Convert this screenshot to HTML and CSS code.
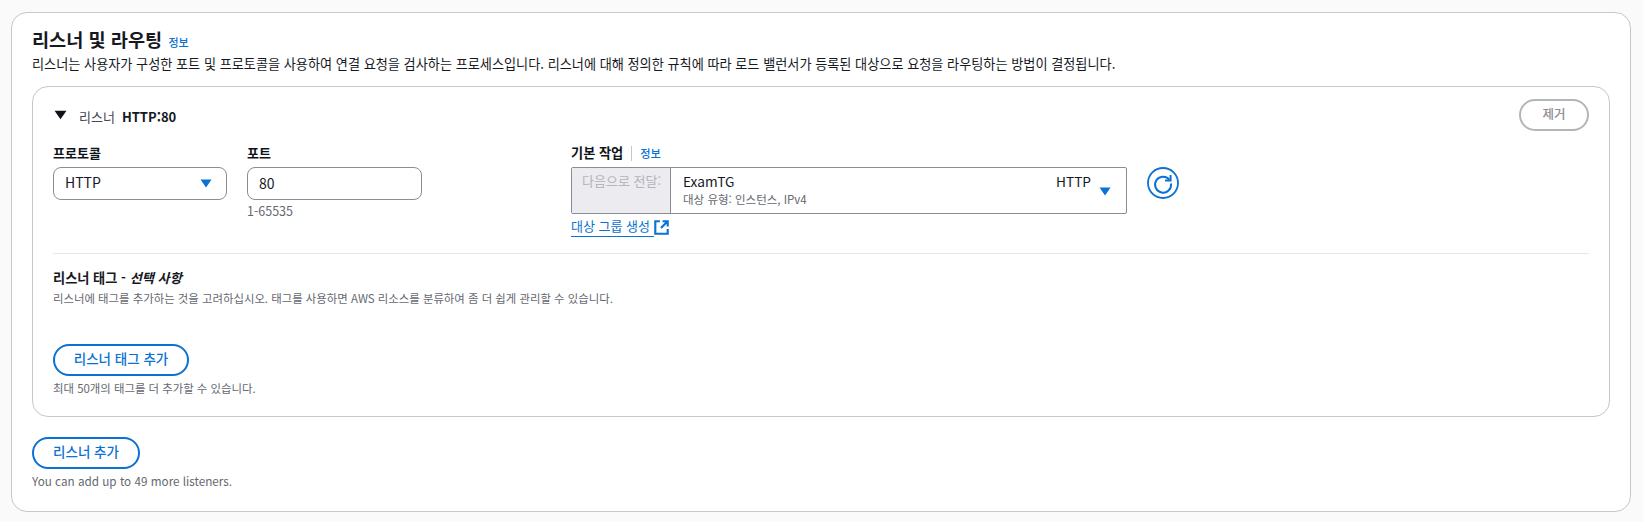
FILE: index.html
```html
<!DOCTYPE html>
<html lang="ko">
<head>
<meta charset="utf-8">
<title>리스너 및 라우팅</title>
<link rel="stylesheet" href="styles.css">
</head>
<body>
<section class="card">
  <header class="head">
    <h2 class="title">리스너 및 라우팅 <a class="info info-title">정보</a></h2>
    <p class="desc">리스너는 사용자가 구성한 포트 및 프로토콜을 사용하여 연결 요청을 검사하는 프로세스입니다. 리스너에 대해 정의한 규칙에 따라 로드 밸런서가 등록된 대상으로 요청을 라우팅하는 방법이 결정됩니다.</p>
  </header>
  <div class="listener">
    <div class="listener-head">
      <div class="listener-name">
        <svg class="caret-black" viewBox="0 0 12 9"><path d="M0.5 0.5h11L6 8.5z"/></svg>
        <span class="ln-label">리스너</span>
        <strong class="ln-value">HTTP:80</strong>
      </div>
      <button class="btn btn-disabled">제거</button>
    </div>
    <div class="fields">
      <div class="field f-protocol">
        <label class="label">프로토콜</label>
        <div class="select"><span class="val">HTTP</span><svg class="caret-blue" viewBox="0 0 12 9"><path d="M0.5 0.5h11L6 8.5z"/></svg></div>
      </div>
      <div class="field f-port">
        <label class="label">포트</label>
        <div class="input"><span class="val val-port">80</span></div>
        <div class="help">1-65535</div>
      </div>
      <div class="field f-action">
        <div class="label-row"><label class="label">기본 작업</label><span class="sep"></span><a class="info">정보</a></div>
        <div class="action-row">
          <div class="action">
            <div class="action-prefix">다음으로 전달:</div>
            <div class="action-main">
              <div class="action-text">
                <div class="action-line"><span>ExamTG</span><span>HTTP</span></div>
                <div class="action-sub">대상 유형: 인스턴스, IPv4</div>
              </div>
              <svg class="caret-blue caret-low" viewBox="0 0 12 9"><path d="M0.5 0.5h11L6 8.5z"/></svg>
            </div>
          </div>
          <svg class="refresh" viewBox="0 0 32 32" fill="none"><circle cx="16" cy="16" r="15" stroke="#0972d3" stroke-width="1.8"/><path d="M22.2 12.5A8 8 0 1 0 24 16.5" stroke="#0972d3" stroke-width="2"/><path d="M23.6 8v5.6H18" stroke="#0972d3" stroke-width="2"/></svg>
        </div>
        <a class="link"><span class="link-text">대상 그룹 생성</span><svg class="ext" viewBox="0 0 14 14" fill="none"><path d="M5.5 1.2H1.2v11.6h11.6V8.5M8 1.2h4.8V6M12.5 1.5L6.5 7.5" stroke="#0972d3" stroke-width="2"/></svg></a>
      </div>
    </div>
    <div class="tags">
      <h3 class="tags-title">리스너 태그 - <em>선택 사항</em></h3>
      <p class="small tags-desc">리스너에 태그를 추가하는 것을 고려하십시오. 태그를 사용하면 AWS 리소스를 분류하여 좀 더 쉽게 관리할 수 있습니다.</p>
      <button class="btn btn-tag">리스너 태그 추가</button>
      <p class="small limit">최대 50개의 태그를 더 추가할 수 있습니다.</p>
    </div>
  </div>
  <button class="btn btn-add">리스너 추가</button>
  <p class="small limit limit-en">You can add up to 49 more listeners.</p>
</section>
</body>
</html>
```
FILE: styles.css
```css
* { box-sizing: border-box; }
html, body { margin: 0; height: 100%; }
body {
  background: #fafafa;
  color: #16191f;
  font-family: "Noto Sans CJK KR", "Open Sans", sans-serif;
  font-size: 14px;
  padding: 12px 12px 10px 11px;
  overflow: hidden;
}
.card {
  height: 500px;
  background: #fff;
  border: 1px solid #c6c6cd;
  border-radius: 16px;
  padding: 16px 20px 0;
}
.head { height: 57px; }
.title { margin: 0; font-size: 18.6px; line-height: 20px; font-weight: 700; }
.info { color: #0972d3; font-size: 11.2px; font-weight: 500; }
.info-title { margin-left: 1px; font-size: 11px; }
.desc { margin: 2px 0 0; font-size: 13.15px; line-height: 20px; color: #16191f; white-space: nowrap; }
.listener {
  height: 331px;
  border: 1px solid #c6c6cd;
  border-radius: 16px;
  padding: 12px 20px 0;
}
.listener-head { display: flex; justify-content: space-between; align-items: flex-start; height: 46px; }
.listener-name { display: flex; align-items: center; height: 32px; padding-top: 2px; }
.caret-black { width: 13px; height: 10px; fill: #0f141a; margin: -2px 12px 0 1px; }
.ln-label { color: #424650; font-size: 13px; }
.ln-value { margin-left: 7px; font-weight: 700; font-size: 13px; }
.btn {
  display: block;
  height: 32px;
  border-radius: 16px;
  border: 2px solid #0972d3;
  background: #fff;
  color: #0972d3;
  padding: 0 0 2px;
  font: 500 13.5px/1 "Noto Sans CJK KR", sans-serif;
}
.btn-disabled { width: 70px; border-color: #b4b4bb; color: #8c8c94; font-size: 12.5px; }
.fields { display: flex; height: 109px; border-bottom: 1px solid #e8e8ec; }
.field { display: flex; flex-direction: column; }
.f-protocol { width: 174px; margin-right: 20px; }
.f-port { width: 175px; margin-right: 149px; }
.f-action { flex: 1; }
.label { font-size: 13px; font-weight: 700; line-height: 16px; height: 20px; margin-bottom: 2px; color: #0f141a; }
.label-row { display: flex; align-items: flex-start; height: 20px; margin-bottom: 2px; }
.label-row .label { margin: 0; font-size: 13.2px; }
.label-row .info { line-height: 16px; }
.sep { width: 1px; height: 15px; background: #c6c6cd; margin: 1px 8px 0; }
.select, .input {
  height: 33px;
  border: 1px solid #8c8c94;
  border-radius: 8px;
  display: flex;
  align-items: center;
  padding: 0 11px;
  font-size: 14px;
  background: #fff;
}
.val { margin-top: -4px; }
.val-port { margin-top: -2px; }
.select { justify-content: space-between; padding-right: 14px; }
.caret-blue { width: 12px; height: 9px; fill: #0972d3; }
.help { font-size: 12.5px; line-height: 16px; color: #656871; margin-top: 3px; }
.action-row { display: flex; align-items: flex-start; gap: 20px; }
.action {
  width: 556px;
  height: 47px;
  border: 1px solid #8c8c94;
  border-radius: 2px;
  display: flex;
}
.action-prefix {
  width: 99px;
  background: #ebebf0;
  border-right: 1px solid #8c8c94;
  color: #b4b4bb;
  font-size: 13px;
  line-height: 16px;
  padding: 5px 0 0 10px;
  white-space: nowrap;
}
.action-main { flex: 1; display: flex; padding: 3px 15px 0 12px; gap: 8px; }
.action-text { flex: 1; }
.action-line { display: flex; justify-content: space-between; font-size: 13.7px; line-height: 20px; }
.action-sub { font-size: 11.5px; line-height: 16px; color: #656871; }
.caret-low { margin-top: 16px; }
.refresh { width: 32px; height: 32px; }
.link { display: flex; align-items: flex-start; color: #0972d3; font-size: 13px; font-weight: 400; line-height: 17px; margin-top: 3px; }
.link-text { border-bottom: 1px solid #0972d3; height: 20px; padding-right: 4px; }
.ext { width: 15px; height: 15px; margin-top: 3px; }
.tags { padding-top: 14px; }
.tags-title { margin: 0; font-size: 13.2px; line-height: 20px; font-weight: 700; }
.small { margin: 0; font-size: 11.4px; line-height: 16px; color: #656871; }
.tags-desc { margin-top: 2px; }
.btn-tag { width: 136px; margin-top: 38px; }
.limit { margin-top: 4px; }
.btn-add { width: 108px; margin-top: 20px; }
.limit-en { font-size: 11.7px; margin-top: 4px; }
```
